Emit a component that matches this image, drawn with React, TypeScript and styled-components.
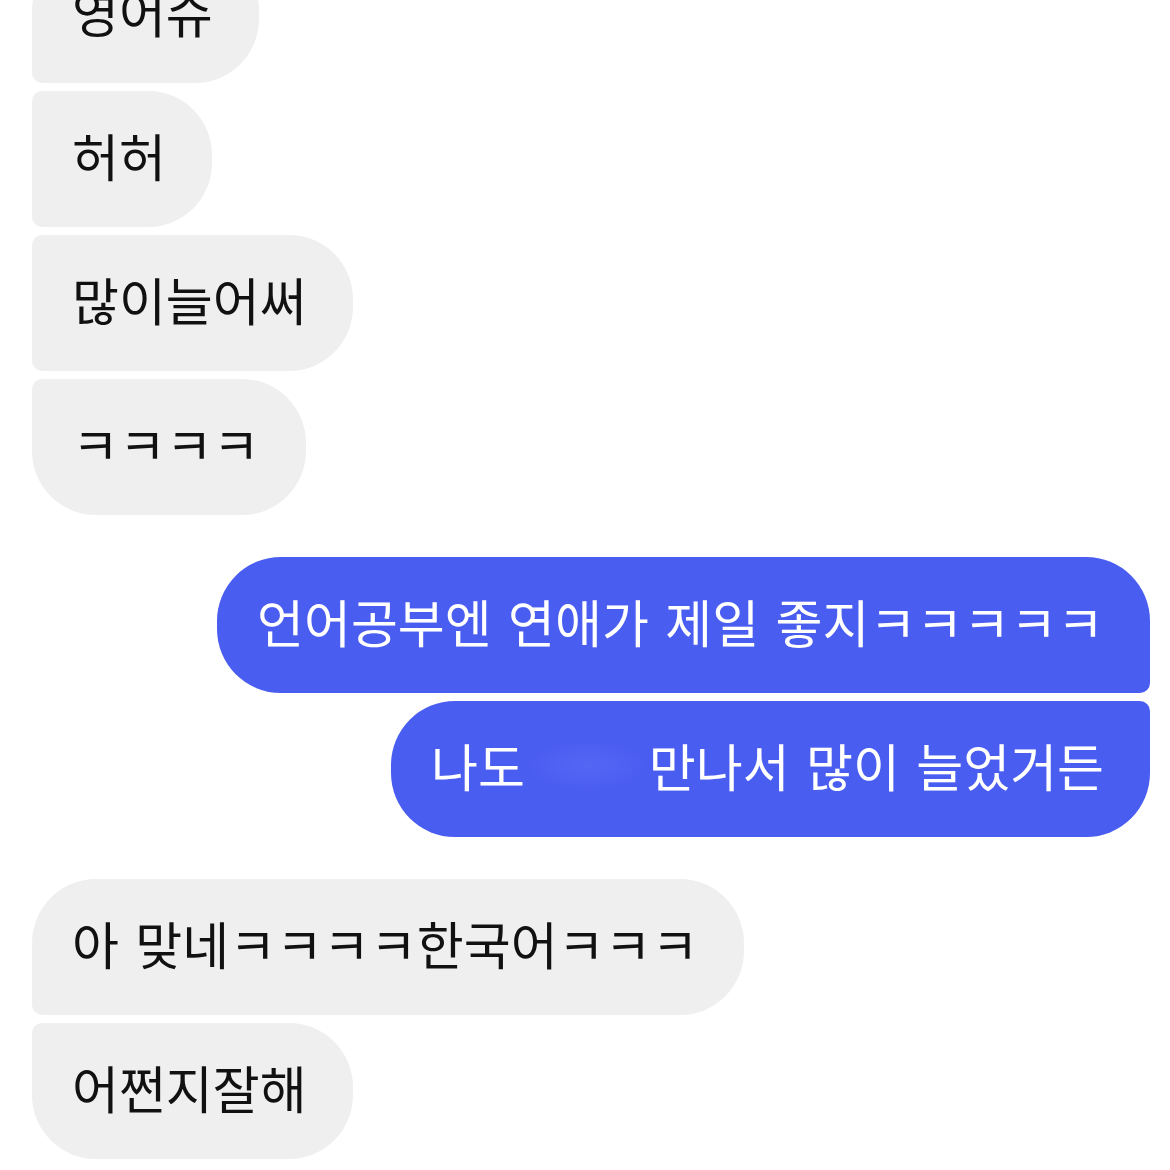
import React from 'react'
import styled, { createGlobalStyle, css } from 'styled-components'

type Side = 'in' | 'out'
type Place = 'first' | 'middle' | 'last'

const BIG = '64px'
const SMALL = '10px'

const GlobalStyle = createGlobalStyle`
  html, body {
    margin: 0;
    padding: 0;
    background: #ffffff;
  }
  body {
    font-family: "Noto Sans CJK KR", "Noto Sans", sans-serif;
    overflow: hidden;
  }
`

const Screen = styled.div`
  width: 1170px;
  height: 1170px;
  overflow: hidden;
  background: #ffffff;
`

// the thread is scrolled: the first bubble sits partly above the top edge
const Thread = styled.div`
  display: flex;
  flex-direction: column;
  gap: 42px;
  padding: 0 20px 0 32px;
  margin-top: -53px;
`

const Group = styled.div<{ $side: Side }>`
  display: flex;
  flex-direction: column;
  gap: 8px;
  align-items: ${({ $side }) => ($side === 'in' ? 'flex-start' : 'flex-end')};
`

const corners = (side: Side, place: Place) => {
  const near = {
    top: place === 'first' ? BIG : SMALL,
    bottom: place === 'last' ? BIG : SMALL,
  }
  if (side === 'in') {
    return css`
      border-radius: ${near.top} ${BIG} ${BIG} ${near.bottom};
    `
  }
  return css`
    border-radius: ${BIG} ${near.top} ${near.bottom} ${BIG};
  `
}

const Bubble = styled.div<{ $side: Side; $place: Place }>`
  box-sizing: border-box;
  height: 136px;
  display: flex;
  align-items: center;
  padding: 0 46px 8px 40px;
  font-size: 51px;
  line-height: 1;
  word-spacing: 5px;
  white-space: nowrap;
  background: ${({ $side }) => ($side === 'in' ? '#efefef' : '#4a5df1')};
  color: ${({ $side }) => ($side === 'in' ? '#111111' : '#ffffff')};
  ${({ $side, $place }) => corners($side, $place)}
`

// blurred-out name
const Hidden = styled.span`
  display: inline-block;
  width: 124px;
  height: 51px;
  vertical-align: middle;
  border-radius: 50%;
  background: radial-gradient(ellipse at center, rgba(110, 130, 255, 0.25) 0%, rgba(74, 92, 241, 0) 70%);
`

const messages: { side: Side; lines: React.ReactNode[] }[] = [
  { side: 'in', lines: ['영어슈', '허허', '많이늘어써', 'ㅋㅋㅋㅋ'] },
  {
    side: 'out',
    lines: [
      '언어공부엔 연애가 제일 좋지ㅋㅋㅋㅋㅋ',
      <>
        나도 <Hidden /> 만나서 많이 늘었거든
      </>,
    ],
  },
  { side: 'in', lines: ['아 맞네ㅋㅋㅋㅋ한국어ㅋㅋㅋ', '어쩐지잘해'] },
]

const placeOf = (i: number, n: number): Place => {
  if (i === n - 1) return 'last'
  if (i === 0) return 'first'
  return 'middle'
}

const App = () => (
  <Screen>
    <GlobalStyle />
    <Thread>
      {messages.map((group, g) => (
        <Group key={g} $side={group.side}>
          {group.lines.map((line, i) => (
            <Bubble key={i} $side={group.side} $place={placeOf(i, group.lines.length)}>
              {line}
            </Bubble>
          ))}
        </Group>
      ))}
    </Thread>
  </Screen>
)

export default App
